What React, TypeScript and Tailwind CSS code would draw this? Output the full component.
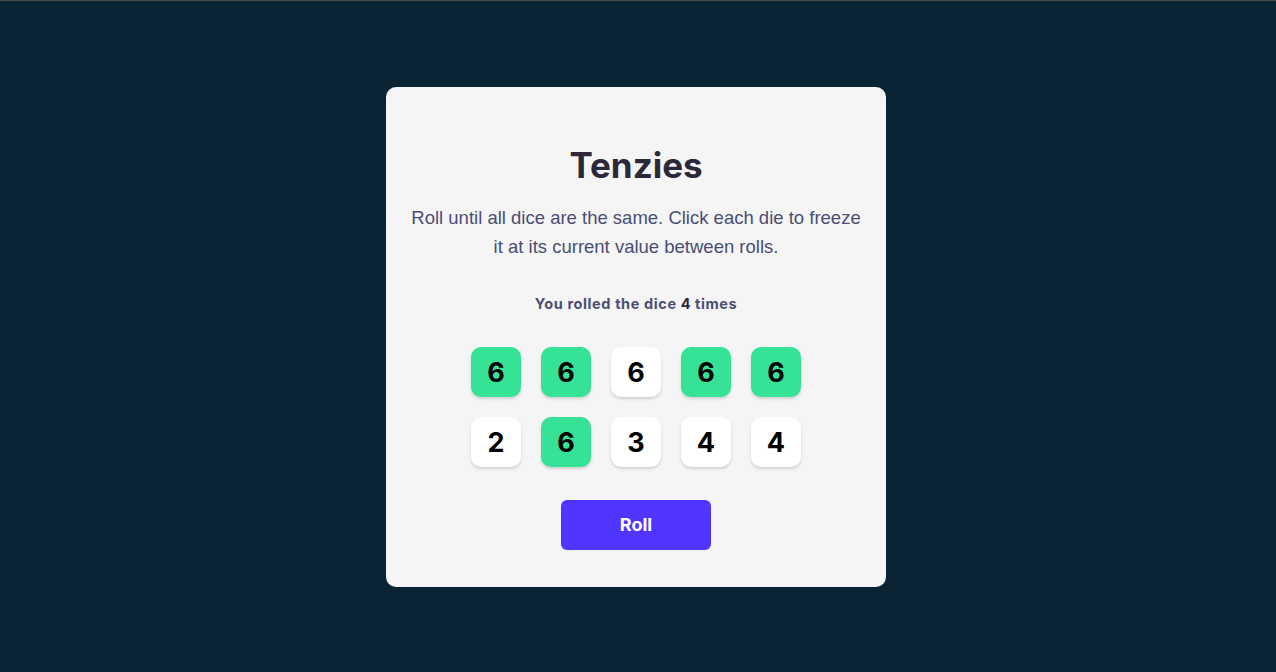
import React from "react";

const dice: { v: number; held: boolean }[] = [
  { v: 6, held: true },
  { v: 6, held: true },
  { v: 6, held: false },
  { v: 6, held: true },
  { v: 6, held: true },
  { v: 2, held: false },
  { v: 6, held: true },
  { v: 3, held: false },
  { v: 4, held: false },
  { v: 4, held: false },
];

export default function App() {
  return (
    <div className="w-full h-[672px] bg-[#0b2434] border-t border-[#4a4a4a] flex items-center justify-center pr-[4px]">
      <main className="w-[500px] h-[500px] bg-[#f5f5f5] rounded-[10px] flex flex-col items-center pt-[54px]">
        <h1 className="font-['Inter',sans-serif] text-[35px] leading-[48px] font-bold text-[#2b283a]">
          Tenzies
        </h1>
        <p className="mt-[14px] font-['Liberation_Sans',Arial,sans-serif] text-[18.5px] leading-[29px] text-[#4a4e74] text-center px-[24px]">
          Roll until all dice are the same. Click each die to freeze it at its current value between rolls.
        </p>
        <p className="mt-[34px] font-['Inter',sans-serif] text-[14.5px] leading-[18px] font-bold text-[#4a4e74] tracking-[0.6px]">
          You rolled the dice <span className="text-[#2b283a]">4</span> times
        </p>
        <div className="mt-[34px] grid grid-cols-5 gap-[20px]">
          {dice.map((d, i) => (
            <div
              key={i}
              className={`w-[50px] h-[50px] rounded-[10px] flex items-center justify-center pt-[3px] font-['Inter',sans-serif] text-[27px] font-bold text-black shadow-[0_2px_3px_rgba(0,0,0,0.15)] ${
                d.held ? "bg-[#35e296]" : "bg-white"
              }`}
            >
              {d.v}
            </div>
          ))}
        </div>
        <button className="mt-[33px] w-[150px] h-[50px] rounded-[6px] bg-[#5035ff] text-white font-['Inter',sans-serif] text-[18px] font-bold">
          Roll
        </button>
      </main>
    </div>
  );
}
